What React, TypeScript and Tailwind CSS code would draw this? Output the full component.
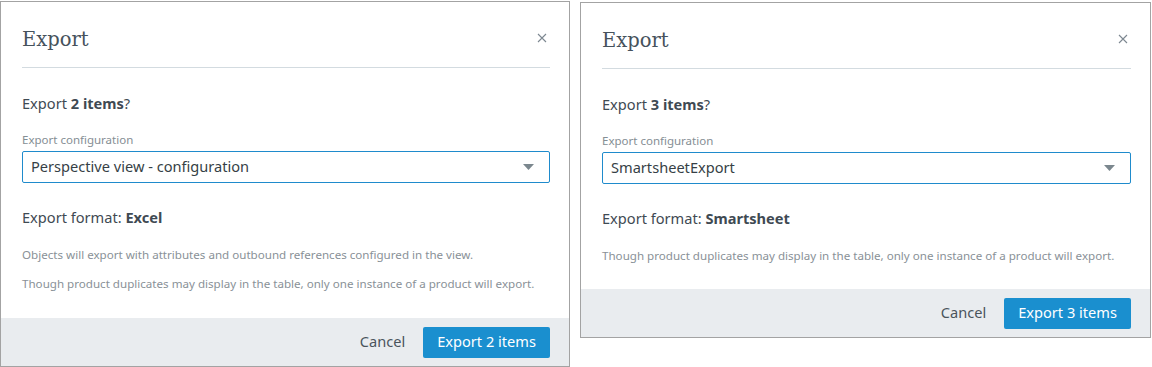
import { ReactNode } from 'react';

const sans = { fontFamily: '"Noto Sans", "Open Sans", sans-serif' };

function CloseIcon() {
    return (
        <svg width="10" height="10" viewBox="0 0 10 10" className="text-[#7d8891]">
            <path d="M1 1L9 9M9 1L1 9" stroke="currentColor" strokeWidth="1.1" />
        </svg>
    );
}

function Caret() {
    return (
        <svg width="11" height="6" viewBox="0 0 11 6">
            <path d="M0 0H11L5.5 6Z" fill="#7b878e" />
        </svg>
    );
}

interface ExportDialogProps {
    count: number;
    config: string;
    format: string;
    notes: string[];
    className?: string;
    bodyClass?: string;
    children?: ReactNode;
}

function ExportDialog({ count, config, format, notes, className, bodyClass }: ExportDialogProps) {
    return (
        <div
            className={'w-[570px] shrink-0 border border-[#a3a3a3] bg-white flex flex-col ' + (className ?? '')}
            style={sans}
        >
            <div className="pl-[21px] pr-[19px]">
                <div className="flex items-start justify-between border-b border-[#d3dbe0] pt-[22px] pb-[11px]">
                    <h2
                        className="text-[19.5px] leading-[32px] text-[#46525c]"
                        style={{ fontFamily: '"DejaVu Serif", "Liberation Serif", serif' }}
                    >
                        Export
                    </h2>
                    <button className="mt-[9px] mr-[3px] leading-none">
                        <CloseIcon />
                    </button>
                </div>
                <p className="mt-[24px] text-[14.6px] leading-[22px] text-[#3f4a53]">
                    Export <b className="font-bold">{count} items</b>?
                </p>
                <label className="mt-[18px] block text-[11.5px] leading-[16px] text-[#858e94]">
                    Export configuration
                </label>
                <div className="mt-[3px] flex h-[32px] items-center justify-between rounded-[2px] border border-[#1f8bcc] pl-[8px] pr-[15px]">
                    <span className="text-[14.6px] text-[#363f46]">{config}</span>
                    <Caret />
                </div>
                <p className="mt-[23px] text-[14.6px] leading-[22px] text-[#3f4a53]">
                    Export format: <b className="font-bold">{format}</b>
                </p>
                <div className={'mt-[18px] flex flex-col gap-[11px] ' + (bodyClass ?? 'pb-[24px]')}>
                    {notes.map((n) => (
                        <p key={n} className="text-[11.6px] leading-[18px] text-[#899197]">
                            {n}
                        </p>
                    ))}
                </div>
            </div>
            <div className="flex h-[48px] items-center justify-end gap-[18px] bg-[#e9ecef] px-[19px]">
                <button className="text-[14.6px] text-[#4a545c]">Cancel</button>
                <button className="h-[31px] rounded-[2px] bg-[#1a8fcf] px-[14px] text-[14.6px] text-white">
                    Export {count} items
                </button>
            </div>
        </div>
    );
}

export default function App() {
    return (
        <div className="flex items-start gap-[10px] bg-white pt-[1px]" style={{ width: 1152, height: 367 }}>
            <ExportDialog
                count={2}
                config="Perspective view - configuration"
                format="Excel"
                bodyClass="pb-[25px]"
                notes={[
                    'Objects will export with attributes and outbound references configured in the view.',
                    'Though product duplicates may display in the table, only one instance of a product will export.',
                ]}
            />
            <ExportDialog
                count={3}
                config="SmartsheetExport"
                format="Smartsheet"
                notes={['Though product duplicates may display in the table, only one instance of a product will export.']}
                className="mt-[1px] w-[571px]"
            />
        </div>
    );
}
